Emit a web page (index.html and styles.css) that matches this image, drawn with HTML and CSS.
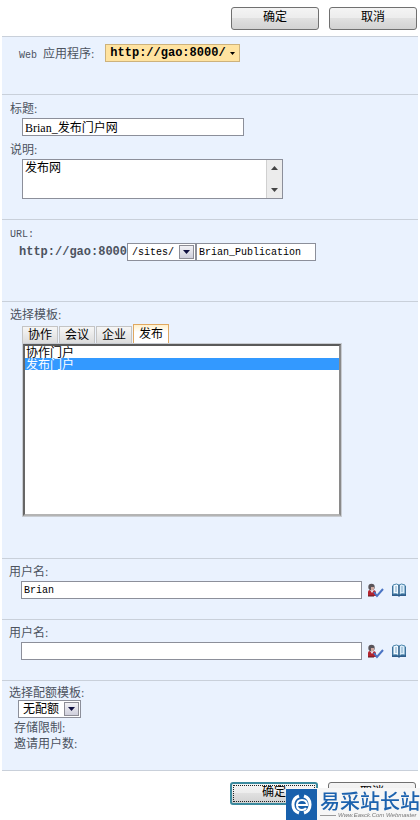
FILE: index.html
```html
<!DOCTYPE html>
<html lang="zh-CN">
<head>
  <meta charset="UTF-8" />
  <meta name="viewport" content="width=device-width, initial-scale=1.0"/>
  <title>创建网站集</title>
  <link rel="stylesheet" href="styles.css">
</head>
<body>
  <svg width="0" height="0" class="sprite" aria-hidden="true">
    <symbol id="down" viewBox="0 0 7 4"><path d="M0 0h7L3.5 4z" fill="currentColor"/></symbol>
    <symbol id="up" viewBox="0 0 7 4"><path d="M0 4h7L3.5 0z" fill="currentColor"/></symbol>
    <symbol id="check-user" viewBox="0 0 17 15">
      <path d="M1 13V9q0-2 2-2h3q3 0 3 3v3z" fill="#b3242f"/>
      <path d="M3 7l2 3 2-3z" fill="#e8e8ee"/>
      <circle cx="4.500" cy="4" r="3.200" fill="#59545a"/>
      <path d="M4 4h3v2q-1 2-3 1z" fill="#d0a8a0"/>
      <path d="M1 13h6" stroke="#5c1820"/>
      <path d="M7 9l3 4 6-7" fill="none" stroke="#4a74c4" stroke-width="2"/>
    </symbol>
    <symbol id="book" viewBox="0 0 16 14">
      <path d="M1 3h14v10H9l-1 1-1-1H1z" fill="#2f5d8c"/>
      <path d="M2 2q4-2 6 0v10q-2-2-6-1z" fill="#f2f9ff" stroke="#4d87ad"/>
      <path d="M14 2q-4-2-6 0v10q2-2 6-1z" fill="#d9ebf8" stroke="#4d87ad"/>
      <path d="M4 4h2M4 6h2M4 8h2M10 4h2M10 6h2M10 8h2" stroke="#7fa9c8"/>
      <path d="M8 2v11" stroke="#24507c"/>
    </symbol>
  </svg>

  <form class="page">
    <div class="buttons">
      <button type="button" class="btn">确定</button>
      <button type="button" class="btn">取消</button>
    </div>

    <section class="section app">
      <span class="app-label"><span class="latin">Web</span> 应用程序:</span>
      <button type="button" class="app-menu">http://gao:8000/<svg class="arrow"><use href="#down"/></svg></button>
    </section>

    <section class="section">
      <label for="title">标题:</label>
      <input id="title" class="field title" type="text" value="Brian_发布门户网">
      <label for="desc">说明:</label>
      <div class="desc">
        <textarea id="desc">发布网</textarea>
        <div class="scroll">
          <svg class="arrow"><use href="#up"/></svg>
          <svg class="arrow"><use href="#down"/></svg>
        </div>
      </div>
    </section>

    <section class="section tall">
      <label for="url" class="latin">URL:</label>
      <div class="url-row">
        <span class="host">http://gao:8000</span>
        <span class="dropdown">
          <select class="latin path" aria-label="路径"><option>/sites/</option></select>
          <span class="drop-btn"><svg class="arrow"><use href="#down"/></svg></span>
        </span>
        <input id="url" class="field latin url" type="text" value="Brian_Publication">
      </div>
    </section>

    <section class="section templates">
      <label for="template">选择模板:</label>
      <div class="tabs">
        <button type="button" class="tab">协作</button>
        <button type="button" class="tab">会议</button>
        <button type="button" class="tab">企业</button>
        <button type="button" class="tab active">发布</button>
      </div>
      <select id="template" class="template-list" size="14">
        <option>协作门户</option>
        <option selected>发布门户</option>
      </select>
    </section>

    <section class="section user">
      <label for="user1">用户名:</label>
      <div class="user-row">
        <input id="user1" class="field latin" type="text" value="Brian">
        <button type="button" class="icon-btn" aria-label="检查姓名"><svg width="17" height="15"><use href="#check-user"/></svg></button>
        <button type="button" class="icon-btn" aria-label="浏览"><svg width="16" height="14"><use href="#book"/></svg></button>
      </div>
    </section>

    <section class="section user">
      <label for="user2">用户名:</label>
      <div class="user-row">
        <input id="user2" class="field latin" type="text">
        <button type="button" class="icon-btn" aria-label="检查姓名"><svg width="17" height="15"><use href="#check-user"/></svg></button>
        <button type="button" class="icon-btn" aria-label="浏览"><svg width="16" height="14"><use href="#book"/></svg></button>
      </div>
    </section>

    <section class="section quota">
      <label for="quota">选择配额模板:</label>
      <span class="dropdown">
        <select id="quota"><option>无配额</option></select>
        <span class="drop-btn"><svg class="arrow"><use href="#down"/></svg></span>
      </span>
      <p>存储限制:</p>
      <p>邀请用户数:</p>
    </section>

    <div class="buttons bottom">
      <button type="button" class="btn default">确定</button>
      <button type="button" class="btn">取消</button>
    </div>
  </form>

  <div class="watermark">
    <svg width="31" height="31" viewBox="0 0 31 31">
      <path d="M0 0h31v31H0z" fill="#1860ac"/>
      <path d="M13 7a9 9 0 0 0 0 17M18 7a9 9 0 0 1 0 17" fill="none" stroke="#fff" stroke-width="3"/>
      <path d="M10 16h11q0-5-5-5-5 0-5 5 0 5 5 5 3 0 4-2" fill="none" stroke="#fff" stroke-width="2"/>
    </svg>
    <div class="brand">
      <strong>易采站长站</strong>
      <small>Www.Easck.Com Webmaster</small>
    </div>
  </div>
</body>
</html>
```

FILE: styles.css
```css
:root {
  --panel: #eaf2fe;
  --line: #c9d0da;
  --text: #4c535e;
  --field-border: #8c8f9a;
}

* {
  box-sizing: border-box;
}

body {
  margin: 0;
  background: #fff;
  color: var(--text);
  font-family: "Liberation Serif", "Noto Sans CJK SC", serif;
  font-size: 12px;
  overflow-x: hidden;
}

button,
input,
select,
textarea {
  margin: 0;
  font: inherit;
  color: #000;
}

.sprite {
  position: absolute;
}

.latin {
  font-family: "Liberation Mono", "Noto Sans CJK SC", monospace;
  font-size: 10px;
}

.arrow {
  width: 7px;
  height: 4px;
}

.buttons {
  display: flex;
  justify-content: flex-end;
  gap: 10px;
  padding: 7px 3px 6px;
}

.buttons.bottom {
  padding: 11px 4px 0;
}

.btn {
  width: 88px;
  height: 23px;
  padding: 0 0 4px;
  line-height: 16px;
  border: 1px solid #707070;
  border-radius: 3px;
  background: linear-gradient(#f4f4f4, #ececec 50%, #e0e0e0 50%, #d2d2d2);
}

.btn.default {
  border: 2px solid #3c8a9e;
  outline: 1px dotted #222;
  outline-offset: -4px;
}

.section {
  display: flex;
  flex-direction: column;
  align-items: flex-start;
  margin: 0 2px;
  padding: 6px 0 20px 20px;
  border-top: 1px solid var(--line);
  background: var(--panel);
}

.section label {
  margin-left: -12px;
  line-height: 17px;
}

.section.app {
  flex-direction: row;
  align-items: center;
  gap: 11px;
  padding: 7px 0 32px 17px;
}

.section.tall {
  padding-bottom: 40px;
}

.section.templates {
  padding-top: 5px;
  padding-bottom: 41px;
}

.app-label .latin {
  margin-right: 3px;
}

.app-menu {
  display: flex;
  align-items: center;
  gap: 4px;
  height: 18px;
  padding: 0 4px;
  border: 1px solid #cdb27c;
  background: #ffe3a0;
  font: bold 12px "Liberation Mono", monospace;
}

.app-menu .arrow {
  width: 5px;
  height: 3px;
}

.field {
  height: 18px;
  padding: 0 2px;
  border: 1px solid var(--field-border);
  background: #fff;
}

.title {
  width: 222px;
  margin-bottom: 6px;
}

.desc {
  display: flex;
  width: 261px;
  height: 40px;
  border: 1px solid var(--field-border);
  background: #fff;
}

.desc textarea {
  flex: 1;
  min-width: 0;
  padding: 0 2px;
  border: none;
  resize: none;
  overflow: hidden;
  line-height: 16px;
}

.scroll {
  display: flex;
  flex-direction: column;
  justify-content: space-between;
  align-items: center;
  width: 16px;
  padding: 6px 0;
  border-left: 1px solid #d0d0d0;
  background: #ececec;
  color: #444;
}

.url-row {
  display: flex;
  align-items: center;
  margin-left: -3px;
}

.host {
  font: bold 12px "Liberation Mono", monospace;
}

.dropdown {
  position: relative;
  display: flex;
}

.dropdown select {
  width: 63px;
  height: 18px;
  padding: 0 4px;
  appearance: none;
  border: 1px solid var(--field-border);
  border-radius: 0;
  background: #fff;
}

.dropdown .path {
  width: 69px;
}

.drop-btn {
  position: absolute;
  top: 2px;
  right: 2px;
  display: flex;
  align-items: center;
  justify-content: center;
  width: 15px;
  height: 14px;
  border: 1px solid #8d8d96;
  background: linear-gradient(#f2f2f6, #cfcfdc);
  color: #101040;
  pointer-events: none;
}

.url {
  width: 120px;
}

.tabs {
  display: flex;
  align-items: flex-end;
  gap: 1px;
}

.tab {
  width: 36px;
  height: 17px;
  padding: 0;
  line-height: 14px;
  border: 1px solid #c4c4c4;
  border-bottom: none;
  background: linear-gradient(#f6f6f6, #dcdcdc);
}

.tab.active {
  height: 19px;
  border-color: #e0a860;
  background: linear-gradient(#fff0cc, #fff 40%);
}

.template-list {
  width: 320px;
  height: 174px;
  padding: 0;
  overflow: hidden;
  border: 3px solid;
  border-color: #5a5a5a #8a8a8a #b4b4b4 #666;
  border-radius: 0;
  outline: 1px solid #c8ccd2;
  outline-offset: -1px;
  background: #fff;
}

.template-list option {
  display: flex;
  align-items: center;
  height: 12px;
  min-height: 0;
  padding: 0 1px;
  line-height: 12px;
}

.template-list option:checked {
  background: linear-gradient(#3399ff, #3399ff);
  -webkit-text-fill-color: #fff;
}

.section.user {
  padding: 5px 11px 20px 19px;
}

.user-row {
  display: flex;
  align-items: center;
  align-self: stretch;
  gap: 5px;
}

.user-row .field {
  flex: 1;
  min-width: 0;
}

.icon-btn {
  display: flex;
  padding: 0;
  border: none;
  background: none;
}

.icon-btn + .icon-btn {
  margin-left: 2px;
}

.section.quota {
  padding: 5px 0 18px 16px;
  border-bottom: 1px solid var(--line);
}

.quota label {
  margin-left: -9px;
  line-height: 14px;
}

.quota .dropdown {
  margin-bottom: 2px;
}

.quota p {
  margin: 0 0 0 -4px;
  line-height: 16px;
}

.watermark {
  position: fixed;
  right: 0;
  bottom: 0;
  display: flex;
  align-items: center;
  width: 134px;
  height: 32px;
  background: #f6f6f6;
}

.watermark svg {
  flex: none;
}

.brand {
  display: flex;
  flex-direction: column;
  padding-left: 3px;
  white-space: nowrap;
}

.brand strong {
  color: #1c62ae;
  font-family: "Noto Sans CJK SC", sans-serif;
  font-size: 20px;
  font-weight: 500;
  line-height: 22px;
}

.brand small {
  display: flex;
  align-items: center;
  gap: 2px;
  color: #777;
  font: italic 6px "Liberation Sans", sans-serif;
}

.brand small::before {
  content: "";
  width: 16px;
  border-top: 1px solid #999;
}
```
